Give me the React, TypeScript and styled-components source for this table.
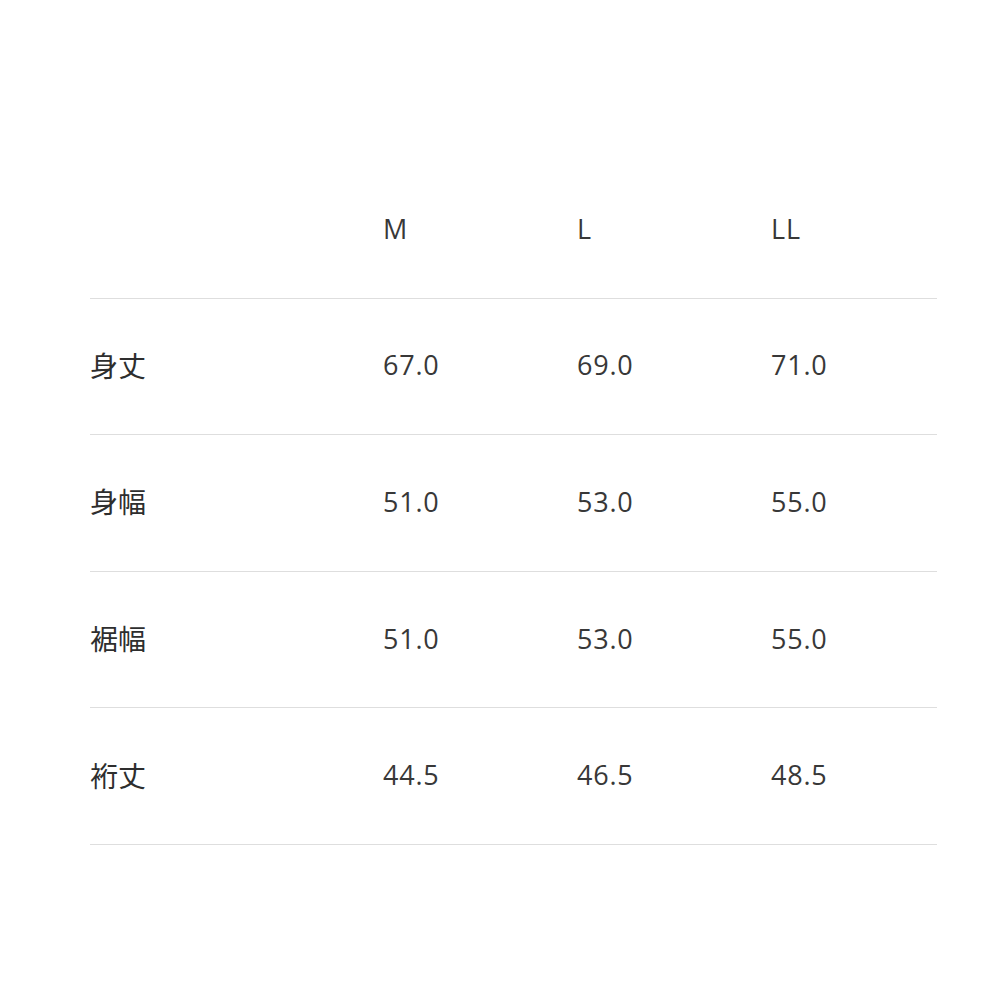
import React from 'react';
import styled, { createGlobalStyle } from 'styled-components';

interface SizeRow {
  label: string;
  values: string[];
}

const sizes = ['M', 'L', 'LL'];

const rows: SizeRow[] = [
  { label: '身丈', values: ['67.0', '69.0', '71.0'] },
  { label: '身幅', values: ['51.0', '53.0', '55.0'] },
  { label: '裾幅', values: ['51.0', '53.0', '55.0'] },
  { label: '裄丈', values: ['44.5', '46.5', '48.5'] },
];

const GlobalStyle = createGlobalStyle`
  body {
    margin: 0;
    background: #fff;
    font-family: "Open Sans", "Noto Sans CJK JP", sans-serif;
    color: #333;
  }
`;

const Page = styled.div`
  width: 1000px;
  height: 1000px;
  padding: 162px 63px 0 90px;
  box-sizing: border-box;
`;

const Table = styled.div`
  display: grid;
  grid-template-columns: 293px 194px 194px 1fr;
`;

const Row = styled.div`
  display: contents;
`;

const Cell = styled.div`
  height: 132.6px;
  padding-bottom: 3px;
  display: flex;
  align-items: center;
  border-bottom: 1px solid #dedede;
  font-size: 27px;
  letter-spacing: 0.8px;
  color: #383838;
`;

const Label = styled(Cell)`
  font-family: "Noto Sans CJK JP", sans-serif;
  font-size: 28px;
  letter-spacing: 0;
  color: #2e2e2e;
`;

const App = () => {
  return (
    <>
      <GlobalStyle />
      <Page>
        <Table>
          <Row>
            <Cell />
            {sizes.map((s) => (
              <Cell key={s}>{s}</Cell>
            ))}
          </Row>
          {rows.map((row) => (
            <Row key={row.label}>
              <Label>{row.label}</Label>
              {row.values.map((v, i) => (
                <Cell key={i}>{v}</Cell>
              ))}
            </Row>
          ))}
        </Table>
      </Page>
    </>
  );
};

export default App;
